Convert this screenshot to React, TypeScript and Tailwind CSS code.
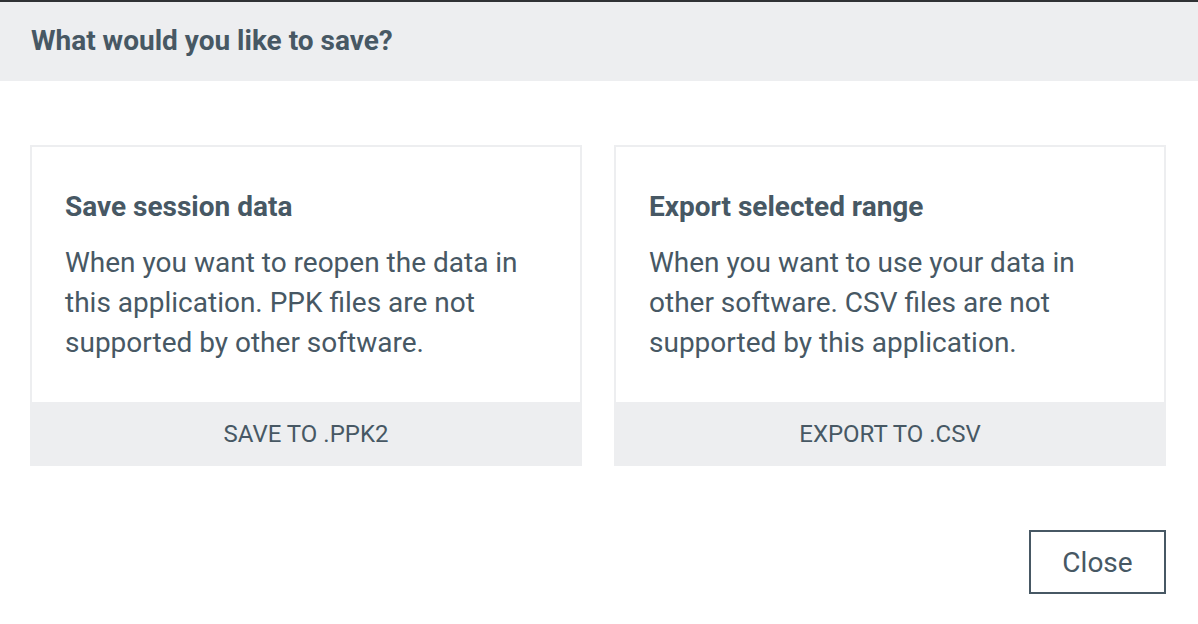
const text = "text-[#475864]"

function OptionCard({
  title,
  body,
  action,
}: {
  title: string
  body: string
  action: string
}) {
  return (
    <div className="flex flex-col border-2 border-[#edeef0] bg-white">
      <div className="h-[255px] px-[33px] pt-[43px]">
        <h3 className={`text-[28px] leading-[34px] font-bold ${text}`}>{title}</h3>
        <p className={`mt-[19px] text-[28px] leading-[40px] ${text}`}>{body}</p>
      </div>
      <button
        className={`h-[64px] -mx-[2px] -mb-[2px] bg-[#edeef0] text-[24px] uppercase ${text}`}
      >
        {action}
      </button>
    </div>
  )
}

export default function App() {
  return (
    <div
      className="w-[1198px] h-[624px] bg-white"
      style={{ fontFamily: "Roboto, 'Liberation Sans', sans-serif" }}
    >
      <div className="h-[81px] border-t-[2px] border-[#2f3235] bg-[#edeef0] px-[31px] flex items-center">
        <h2 className={`text-[28px] font-bold -mt-[2px] ${text}`}>What would you like to save?</h2>
      </div>

      <div className="pl-[30px] pr-[32px] pt-[64px]">
        <div className="grid grid-cols-2 gap-[32px]">
          <OptionCard
            title="Save session data"
            body="When you want to reopen the data in this application. PPK files are not supported by other software."
            action="Save to .ppk2"
          />
          <OptionCard
            title="Export selected range"
            body="When you want to use your data in other software. CSV files are not supported by this application."
            action="Export to .csv"
          />
        </div>

        <div className="flex justify-end mt-[64px]">
          <button
            className={`w-[137px] h-[64px] border-2 border-[#475864] text-[28px] pt-[1px] ${text}`}
          >
            Close
          </button>
        </div>
      </div>
    </div>
  )
}
